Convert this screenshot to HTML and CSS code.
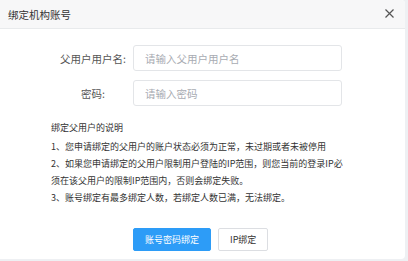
FILE: index.html
```html
<!DOCTYPE html>
<html lang="zh-CN">
<head>
    <meta charset="UTF-8">
    <meta name="viewport" content="width=device-width, initial-scale=1.0">
    <title>绑定机构账号</title>
    <link rel="stylesheet" href="styles.css">
</head>
<body>

<div class="dialog">
    <!-- 标题栏 -->
    <div class="dialog-header">
        <span class="dialog-title">绑定机构账号</span>
        <span class="dialog-close">
            <svg width="9" height="9" viewBox="0 0 9 9">
                <path d="M0.5 0.5 L8.5 8.5 M8.5 0.5 L0.5 8.5" stroke="#555" stroke-width="1.2" fill="none"/>
            </svg>
        </span>
    </div>

    <div class="dialog-body">
        <div class="form-row">
            <label class="form-label">父用户用户名:</label>
            <input class="form-input" type="text" placeholder="请输入父用户用户名">
        </div>
        <div class="form-row">
            <label class="form-label">密码:</label>
            <input class="form-input" type="password" placeholder="请输入密码">
        </div>

        <!-- 说明 -->
        <div class="notes">
            <p class="notes-title">绑定父用户的说明</p>
            <p>1、您申请绑定的父用户的账户状态必须为正常，未过期或者未被停用</p>
            <p>2、如果您申请绑定的父用户限制用户登陆的IP范围，则您当前的登录IP必</p>
            <p>须在该父用户的限制IP范围内，否则会绑定失败。</p>
            <p>3、账号绑定有最多绑定人数，若绑定人数已满，无法绑定。</p>
        </div>

        <div class="buttons">
            <button class="btn btn-primary">账号密码绑定</button>
            <button class="btn">IP绑定</button>
        </div>
    </div>
</div>

</body>
</html>
```

FILE: styles.css
```css
body {
    margin: 0;
    padding: 0;
    width: 408px;
    height: 261px;
    background-color: #eef0f3;
    font-family: "Noto Sans CJK SC", "Noto Sans", sans-serif;
    overflow: hidden;
}

.dialog {
    width: 405px;
    height: 259px;
    background-color: #fff;
    border-radius: 0 4px 4px 0;
    overflow: hidden;
}

.dialog-header {
    height: 29px;
    background-color: #f7f7f8;
    border-bottom: 1px solid #e8eaec;
    display: flex;
    align-items: center;
    justify-content: space-between;
    padding: 0 11px 0 8px;
    box-sizing: border-box;
}

.dialog-title {
    font-size: 10.5px;
    color: #333;
}

.dialog-close {
    display: flex;
    margin-top: -1px;
}

.dialog-body {
    padding: 16px 0 0 51px;
}

.form-row {
    display: flex;
    align-items: center;
    margin-bottom: 9px;
}

.form-label {
    width: 80px;
    margin-left: 2px;
    text-align: center;
    font-size: 10.5px;
    color: #555;
}

.form-input {
    width: 209px;
    height: 26px;
    box-sizing: border-box;
    border: 1px solid #e3e5e8;
    border-radius: 3px;
    padding: 0 11px;
    font-family: inherit;
    font-size: 10.5px;
    outline: none;
}

.form-input::placeholder {
    color: #a8abb2;
}

.notes {
    margin-top: 13px;
    font-size: 9px;
    color: #333;
}

.notes p {
    margin: 0;
    line-height: 17px;
}

.notes .notes-title {
    margin-bottom: 2px;
}

.buttons {
    display: flex;
    gap: 7px;
    margin-top: 22px;
    margin-left: 82px;
}

.btn {
    height: 23px;
    padding: 0 11px;
    border: 1px solid #dcdee2;
    border-radius: 2px;
    background-color: #fff;
    color: #333;
    font-family: inherit;
    font-size: 9px;
    cursor: pointer;
}

.btn-primary {
    background-color: #2d9cf7;
    border-color: #2d9cf7;
    color: #fff;
}
```
